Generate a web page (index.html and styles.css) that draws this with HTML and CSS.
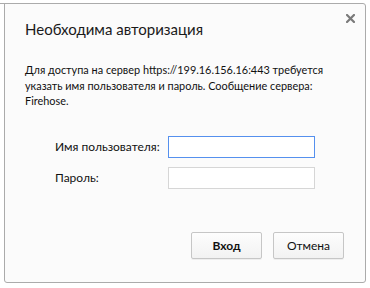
FILE: index.html
```html
<!DOCTYPE html>
<html>
<head>
<meta charset="utf-8">
<link rel="stylesheet" href="styles.css">
</head>
<body>
<div class="dialog">
  <div class="head">
    <div class="title">Необходима авторизация</div>
    <svg class="close" width="9" height="9" viewBox="0 0 9 9"><path d="M1 1 L8 8 M8 1 L1 8" stroke="#7a7a7a" stroke-width="2.2" stroke-linecap="square"/></svg>
  </div>
  <p class="msg">Для доступа на сервер https://199.16.156.16:443 требуется указать имя пользователя и пароль. Сообщение сервера: Firehose.</p>
  <div class="form">
    <label class="lbl">Имя пользователя:</label>
    <div class="input focused"></div>
    <label class="lbl">Пароль:</label>
    <div class="input"></div>
  </div>
  <div class="buttons">
    <button class="btn primary">Вход</button>
    <button class="btn">Отмена</button>
  </div>
</div>
</body>
</html>
```

FILE: styles.css
```css
html, body {
  margin: 0;
  padding: 0;
  background: #ffffff;
  width: 370px;
  height: 288px;
  overflow: hidden;
  font-family: Lato, "Open Sans", sans-serif;
  color: #222;
}
.dialog {
  position: relative;
  box-sizing: border-box;
  margin: 3px 0 0 4px;
  width: 362px;
  height: 280px;
  background: #fbfbfb;
  border: 1px solid #ababab;
  border-radius: 0 3px 3px 3px;
  padding: 0 21px 0 20px;
}
.dialog::before {
  content: "";
  position: absolute;
  left: -5px;
  top: -1px;
  width: 5px;
  height: 1px;
  background: #ababab;
}
.head {
  display: flex;
  justify-content: space-between;
  align-items: flex-start;
  padding-top: 15px;
}
.title {
  font-size: 15px;
  line-height: 20px;
  color: #1a1a1a;
}
.close {
  display: block;
  flex: none;
  margin-top: -5px;
  margin-right: -11px;
}
.msg {
  margin: 23px -14px 0 0;
  font-size: 10.9px;
  line-height: 15.5px;
  color: #111;
}
.form {
  display: grid;
  grid-template-columns: 113px 147px;
  row-gap: 9px;
  align-items: center;
  margin: 27px 0 0 30px;
}
.lbl {
  font-size: 12px;
  color: #111;
}
.input {
  box-sizing: border-box;
  height: 22px;
  background: #fff;
  border: 1px solid #d6d6d6;
}
.input.focused {
  border-color: #5590ee;
}
.buttons {
  display: flex;
  justify-content: flex-end;
  gap: 11px;
  margin-top: 43px;
}
.btn {
  box-sizing: border-box;
  width: 71px;
  height: 27px;
  font-family: Lato, "Open Sans", sans-serif;
  font-size: 12px;
  color: #111;
  background: linear-gradient(#fdfdfd, #f2f2f2);
  border: 1px solid #c6c6c6;
  border-radius: 2px;
  box-shadow: 0 1px 0 rgba(0,0,0,0.05);
  padding: 0;
}
.btn.primary {
  font-weight: bold;
}
```
